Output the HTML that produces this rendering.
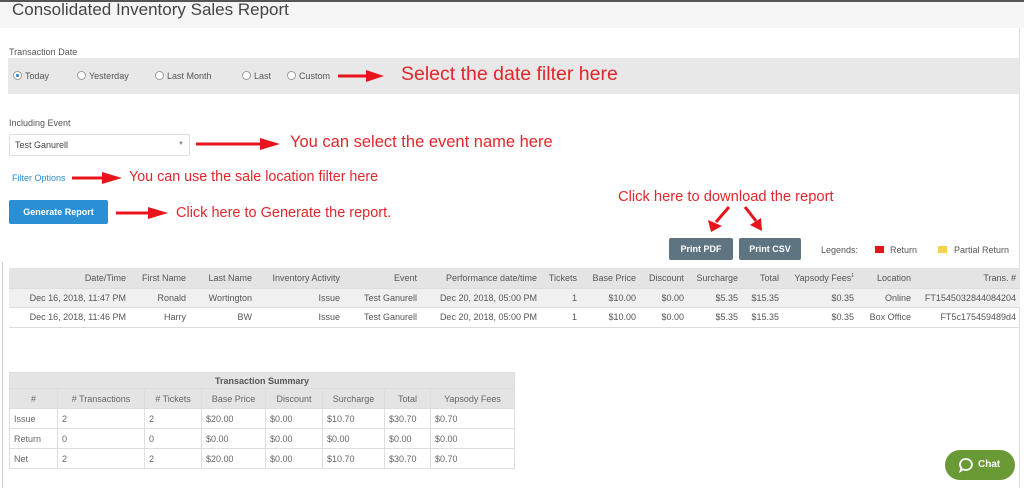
<!DOCTYPE html>
<html><head><style>
*{margin:0;padding:0;box-sizing:border-box}
body{width:1024px;height:488px;overflow:hidden;background:#fff;font-family:"Liberation Sans",sans-serif;color:#555;position:relative;font-size:9px}
.a{position:absolute;white-space:nowrap}
.red{color:#e3262b;font-size:15px}
.rad{display:inline-block;width:9px;height:9px;border:1px solid #999;border-radius:50%;background:#fff;vertical-align:-1px;margin-right:3px;position:relative}
.rad.on::after{content:"";position:absolute;left:2px;top:2px;width:3px;height:3px;border-radius:50%;background:#2a7fd4}
table{border-collapse:collapse;position:absolute}
.t1 td{height:19.5px;padding:0 4px;text-align:right;border-bottom:1px solid #ddd;font-size:9px;color:#555}
.t1 tr.h td{background:#e4e4e4;height:20px}
.t1 tr.g td{background:#f0f0f0}
.t2 td{border:1px solid #ddd;height:20px;padding:0 4px;font-size:9px;color:#666}
.t2 tr.h td{background:#e4e4e4;text-align:center}
.btn{position:absolute;background:#5e7481;color:#fff;font-weight:bold;font-size:9px;text-align:center;border-radius:2px}
</style></head><body>
<div class="a" style="left:0;top:0;width:1024px;height:28px;background:#f5f5f5;border-top:2px solid #555"></div>
<div class="a" style="left:12px;top:0px;font-size:17px;color:#444">Consolidated Inventory Sales Report</div>
<div class="a" style="left:1019px;top:28px;width:1px;height:460px;background:#ddd"></div>
<div class="a" style="left:2px;top:262px;width:1px;height:226px;background:#ccc"></div>

<div class="a" style="left:9px;top:47px">Transaction Date</div>
<div class="a" style="left:8px;top:58px;width:1012px;height:36px;background:#e8e8e8"></div>
<div class="a" style="left:13px;top:71px"><span class="rad on"></span>Today</div>
<div class="a" style="left:77px;top:71px"><span class="rad"></span>Yesterday</div>
<div class="a" style="left:155px;top:71px"><span class="rad"></span>Last Month</div>
<div class="a" style="left:242px;top:71px"><span class="rad"></span>Last</div>
<div class="a" style="left:287px;top:71px"><span class="rad"></span>Custom</div>
<div class="a red" style="left:401px;top:63px;font-size:19.5px">Select the date filter here</div>

<div class="a" style="left:9px;top:118px">Including Event</div>
<div class="a" style="left:9px;top:134px;width:181px;height:22px;border:1px solid #ddd;border-radius:2px;background:#fff;padding:5px 5px;color:#444">Test Ganurell<span style="position:absolute;right:5px;top:6px;font-size:6px;color:#888">▼</span></div>
<div class="a red" style="left:290px;top:133px;font-size:16.5px">You can select the event name here</div>
<div class="a" style="left:12px;top:173px;color:#2a8ccc">Filter Options</div>
<div class="a red" style="left:129px;top:169px;font-size:14.3px">You can use the sale location filter here</div>
<div class="a" style="left:9px;top:200px;width:99px;height:24px;background:#2b8fd6;border-radius:2px;color:#fff;font-weight:bold;text-align:center;line-height:24px">Generate Report</div>
<div class="a red" style="left:176px;top:205px;font-size:14.5px">Click here to Generate the report.</div>
<div class="a red" style="left:618px;top:189px;font-size:14.7px">Click here to download the report</div>

<svg class="a" style="left:0;top:0" width="1024" height="488">
<g fill="#e8141b" stroke="#e8141b">
<line x1="338" y1="76" x2="368" y2="76" stroke-width="3"/><polygon points="366,70 384,76 366,82" stroke="none"/>
<line x1="196" y1="144" x2="262" y2="144" stroke-width="3"/><polygon points="260,138 280,144 260,150" stroke="none"/>
<line x1="72" y1="178" x2="104" y2="178" stroke-width="3"/><polygon points="102,172 122,178 102,184" stroke="none"/>
<line x1="116" y1="213" x2="150" y2="213" stroke-width="3"/><polygon points="148,207 168,213 148,219" stroke="none"/>
<line x1="729" y1="207" x2="716" y2="222" stroke-width="3"/><polygon points="708,220 711,232 722,226" stroke="none"/>
<line x1="745" y1="207" x2="756" y2="221" stroke-width="3"/><polygon points="750,225 762,231 761,218" stroke="none"/>
</g></svg>

<div class="btn" style="left:669px;top:238px;width:64px;height:22px;line-height:22px">Print PDF</div>
<div class="btn" style="left:739px;top:238px;width:62px;height:22px;line-height:22px">Print CSV</div>
<div class="a" style="left:821px;top:245px">Legends:</div>
<div class="a" style="left:875px;top:246px;width:9px;height:7px;background:#e8141b"></div>
<div class="a" style="left:890px;top:245px">Return</div>
<div class="a" style="left:938px;top:246px;width:9px;height:7px;background:#f5d24a"></div>
<div class="a" style="left:954px;top:245px">Partial Return</div>

<table class="t1" style="left:9px;top:268px;width:1011px">
<tr class="h"><td style="width:121px">Date/Time</td><td style="width:60px">First Name</td><td style="width:66px">Last Name</td><td style="width:88px">Inventory Activity</td><td style="width:77px">Event</td><td style="width:120px">Performance date/time</td><td style="width:40px">Tickets</td><td style="width:59px">Base Price</td><td style="width:48px">Discount</td><td style="width:54px">Surcharge</td><td style="width:41px">Total</td><td style="width:75px">Yapsody Fees<sup style="font-size:5px">1</sup></td><td style="width:57px">Location</td><td>Trans. #</td></tr>
<tr class="g"><td>Dec 16, 2018, 11:47 PM</td><td>Ronald</td><td>Wortington</td><td>Issue</td><td>Test Ganurell</td><td>Dec 20, 2018, 05:00 PM</td><td>1</td><td>$10.00</td><td>$0.00</td><td>$5.35</td><td>$15.35</td><td>$0.35</td><td>Online</td><td>FT1545032844084204</td></tr>
<tr><td>Dec 16, 2018, 11:46 PM</td><td>Harry</td><td>BW</td><td>Issue</td><td>Test Ganurell</td><td>Dec 20, 2018, 05:00 PM</td><td>1</td><td>$10.00</td><td>$0.00</td><td>$5.35</td><td>$15.35</td><td>$0.35</td><td>Box Office</td><td>FT5c175459489d4</td></tr>
</table>

<table class="t2" style="left:9px;top:372px;width:506px">
<tr class="h"><td colspan="8" style="height:16px;font-weight:bold;color:#555">Transaction Summary</td></tr>
<tr class="h"><td style="width:48px">#</td><td style="width:87px"># Transactions</td><td style="width:57px"># Tickets</td><td style="width:64px">Base Price</td><td style="width:57px">Discount</td><td style="width:62px">Surcharge</td><td style="width:46px">Total</td><td>Yapsody Fees</td></tr>
<tr><td>Issue</td><td>2</td><td>2</td><td>$20.00</td><td>$0.00</td><td>$10.70</td><td>$30.70</td><td>$0.70</td></tr>
<tr><td>Return</td><td>0</td><td>0</td><td>$0.00</td><td>$0.00</td><td>$0.00</td><td>$0.00</td><td>$0.00</td></tr>
<tr><td>Net</td><td>2</td><td>2</td><td>$20.00</td><td>$0.00</td><td>$10.70</td><td>$30.70</td><td>$0.70</td></tr>
</table>

<div class="a" style="left:945px;top:450px;width:70px;height:30px;background:#6a9a35;border-radius:15px;color:#fff;font-weight:bold;font-size:10px;line-height:30px;padding-left:33px">Chat</div>
<svg class="a" style="left:958px;top:457px" width="16" height="16"><path d="M8 2a6 5.5 0 1 1-3 10.3L2.5 14l.8-3A5.5 5.5 0 0 1 8 2z" fill="none" stroke="#fff" stroke-width="1.8"/></svg>
</body></html>
